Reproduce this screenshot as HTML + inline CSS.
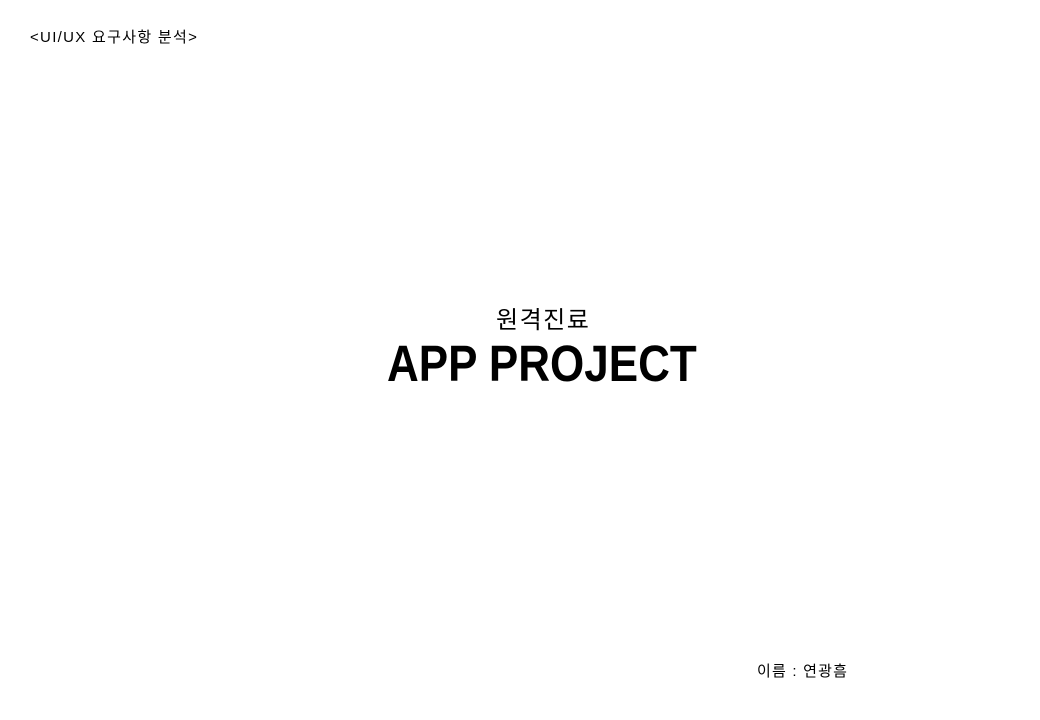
<!DOCTYPE html>
<html><head><meta charset="utf-8"><style>
body{margin:0;width:1040px;height:720px;background:#fff;position:relative;overflow:hidden;font-family:"Liberation Sans","Noto Sans CJK KR",sans-serif;color:#000}
.a{position:absolute;white-space:nowrap}
</style></head><body>
<div class="a" style="left:30px;top:26px;font-size:15px;letter-spacing:1.3px">&lt;UI/UX 요구사항 분석&gt;</div>
<div class="a" style="left:496px;top:300px;font-size:24px;letter-spacing:1.5px">원격진료</div>
<div class="a" style="left:387px;top:336px;font-size:44px;font-weight:bold;transform:scaleY(1.15);transform-origin:top left">APP PROJECT</div>
<div class="a" style="left:757px;top:660px;font-size:15px;letter-spacing:1.2px">이름 : 연광흠</div>
</body></html>
